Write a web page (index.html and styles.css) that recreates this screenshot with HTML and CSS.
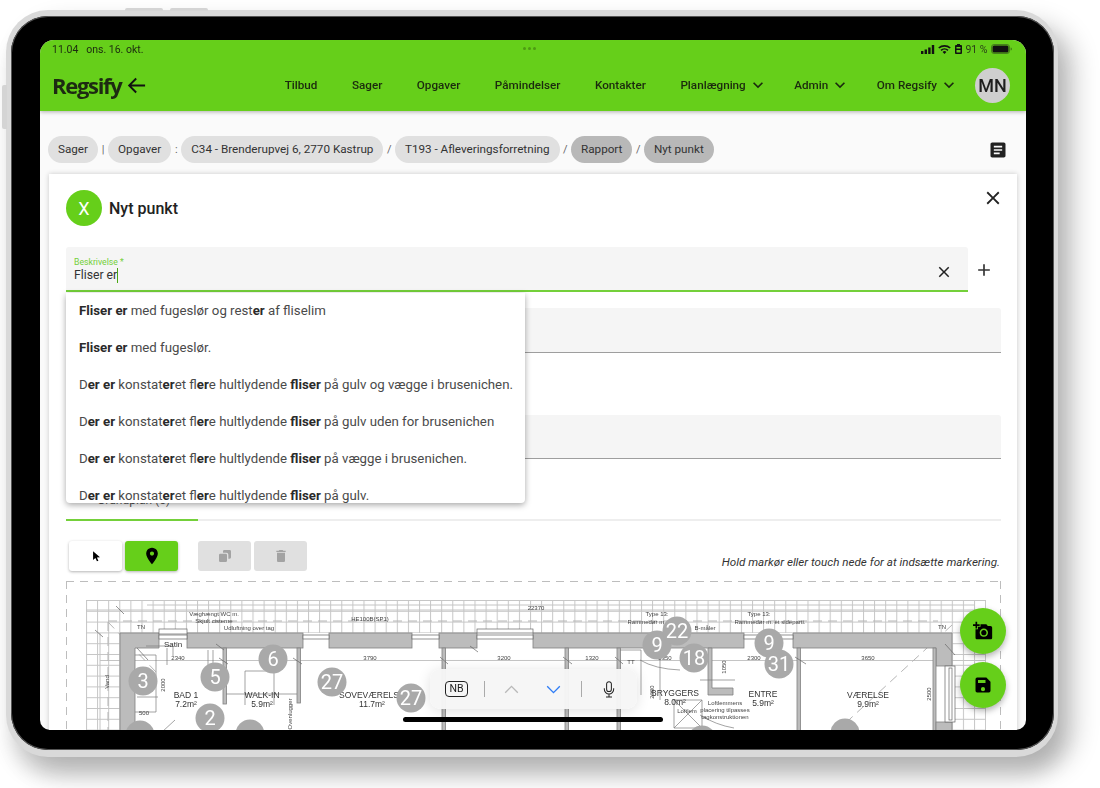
FILE: index.html
```html
<!DOCTYPE html>
<html lang="da">
<head>
<meta charset="utf-8">
<title>Regsify - Nyt punkt</title>
<link rel="stylesheet" href="styles.css">
</head>
<body>
<div class="device">
  <i class="hw hw-top1"></i><i class="hw hw-top2"></i><i class="hw hw-left"></i>
  <div class="bezel">
    <div class="screen">
      <header class="appbar">
        <div class="status">
          <span>11.04 &nbsp;&nbsp;ons. 16. okt.</span>
          <span class="dots"><i></i><i></i><i></i></span>
          <span class="status-right">
            <svg width="14" height="9" viewBox="0 0 14 9"><path d="M0 6h2.4v3H0zM3.6 4.5H6V9H3.6zM7.2 2.5h2.4V9H7.2zM10.8 0h2.4v9h-2.4z"/></svg>
            <svg width="13" height="10" viewBox="0 0 13 10"><path d="M6.5 10 4.6 7.9a2.8 2.8 0 0 1 3.8 0zM3.6 6.9 2.5 5.7a6 6 0 0 1 8 0L9.4 6.9a4.3 4.3 0 0 0-5.8 0zM1.4 4.6 .2 3.4a9.3 9.3 0 0 1 12.6 0l-1.2 1.2a7.6 7.6 0 0 0-10.2 0z"/></svg>
            <svg width="7" height="10" viewBox="0 0 7 10"><path d="M2 0h3v1h1a1 1 0 0 1 1 1v7a1 1 0 0 1-1 1H1a1 1 0 0 1-1-1V2a1 1 0 0 1 1-1h1zM1.500 3v1.500h4V3zm0 3v2.500h4V6z" fill-rule="evenodd"/></svg>
            <span class="pct">91 %</span>
            <svg width="21" height="10" viewBox="0 0 21 10"><rect x=".5" y=".5" width="18" height="9" rx="2.500" fill="none" stroke="#222" stroke-opacity=".45"/><rect x="1.500" y="1.500" width="16" height="7" rx="1.500"/><path d="M19.700 3.500c.8.3 1.100.8 1.100 1.500s-.3 1.200-1.100 1.500z" fill-opacity=".5"/></svg>
          </span>
        </div>
        <nav class="navrow">
          <div class="logo">Regsify
            <svg viewBox="0 0 24 24"><path d="M22 11H7.830l5.590-5.590L12 4l-8 8 8 8 1.410-1.410L7.830 13H22z"/></svg>
          </div>
          <div class="navlinks">
            <span>Tilbud</span><span>Sager</span><span>Opgaver</span><span>Påmindelser</span><span>Kontakter</span>
            <span class="drop">Planlægning <svg viewBox="0 0 24 24"><path d="M16.590 8.590 12 13.170 7.410 8.590 6 10l6 6 6-6z"/></svg></span>
            <span class="drop">Admin <svg viewBox="0 0 24 24"><path d="M16.590 8.590 12 13.170 7.410 8.590 6 10l6 6 6-6z"/></svg></span>
            <span class="drop">Om Regsify <svg viewBox="0 0 24 24"><path d="M16.590 8.590 12 13.170 7.410 8.590 6 10l6 6 6-6z"/></svg></span>
          </div>
          <div class="user">MN</div>
        </nav>
      </header>

      <main class="page">
        <div class="crumbs">
          <span class="chip">Sager</span><span class="sep">|</span>
          <span class="chip">Opgaver</span><span class="sep">:</span>
          <span class="chip">C34 - Brenderupvej 6, 2770 Kastrup</span><span class="sep slash">/</span>
          <span class="chip">T193 - Afleveringsforretning</span><span class="sep slash">/</span>
          <span class="chip dark">Rapport</span><span class="sep slash">/</span>
          <span class="chip dark">Nyt punkt</span>
          <svg class="doc" viewBox="0 0 24 24"><path d="M19 3H5c-1.100 0-2 .9-2 2v14c0 1.100.9 2 2 2h14c1.100 0 2-.9 2-2V5c0-1.100-.9-2-2-2zm-5 14H7v-2h7v2zm3-4H7v-2h10v2zm0-4H7V7h10v2z"/></svg>
        </div>

        <section class="card">
          <div class="card-head">
            <div class="badge">X</div>
            <h1>Nyt punkt</h1>
            <svg class="close" viewBox="0 0 24 24"><path d="M19 6.410 17.590 5 12 10.590 6.410 5 5 6.410 10.590 12 5 17.590 6.410 19 12 13.410 17.590 19 19 17.590 13.410 12z"/></svg>
          </div>

          <div class="desc-row">
            <div class="input active">
              <label>Beskrivelse *</label>
              <div class="value">Fliser er<i class="caret"></i></div>
              <svg class="clear" viewBox="0 0 24 24"><path d="M19 6.410 17.590 5 12 10.590 6.410 5 5 6.410 10.590 12 5 17.590 6.410 19 12 13.410 17.590 19 19 17.590 13.410 12z"/></svg>
              <ul class="suggest">
                <li><b>Fliser er</b> med fugeslør og rest<b>er</b> af fliselim</li>
                <li><b>Fliser er</b> med fugeslør.</li>
                <li>D<b>er er</b> konstat<b>er</b>et fl<b>er</b>e hultlydende <b>fliser</b> på gulv og vægge i brusenichen.</li>
                <li>D<b>er er</b> konstat<b>er</b>et fl<b>er</b>e hultlydende <b>fliser</b> på gulv uden for brusenichen</li>
                <li>D<b>er er</b> konstat<b>er</b>et fl<b>er</b>e hultlydende <b>fliser</b> på vægge i brusenichen.</li>
                <li>D<b>er er</b> konstat<b>er</b>et fl<b>er</b>e hultlydende <b>fliser</b> på gulv.</li>
              </ul>
            </div>
            <svg class="plus" viewBox="0 0 24 24"><path d="M19 13h-6v6h-2v-6H5v-2h6V5h2v6h6v2z"/></svg>
          </div>

          <div class="input blank first"></div>
          <div class="input blank second"></div>

          <div class="tabs"><span class="tab">Grundplan (5)</span></div>

          <div class="tools">
            <button class="tool"><svg viewBox="0 0 24 24"><path d="M7 4v15l4-3.600 2.600 5.800 2.500-1.100-2.600-5.700 5.300-.4z"/></svg></button>
            <button class="tool on"><svg viewBox="0 0 24 24"><path d="M12 2C8.130 2 5 5.130 5 9c0 5.250 7 13 7 13s7-7.750 7-13c0-3.870-3.130-7-7-7zm0 9.500c-1.380 0-2.500-1.120-2.500-2.500s1.120-2.500 2.500-2.500 2.500 1.120 2.500 2.500-1.120 2.500-2.500 2.500z"/></svg></button>
            <button class="tool off gap"><svg viewBox="0 0 24 24"><path d="M11 3h8a2 2 0 0 1 2 2v9a2 2 0 0 1-2 2h-2V10a3 3 0 0 0-3-3H9V5a2 2 0 0 1 2-2zM5 8.500h8a2 2 0 0 1 2 2V19a2 2 0 0 1-2 2H5a2 2 0 0 1-2-2v-8.500a2 2 0 0 1 2-2z"/></svg></button>
            <button class="tool off"><svg viewBox="0 0 24 24"><path d="M6 19c0 1.100.9 2 2 2h8c1.100 0 2-.9 2-2V7H6v12zM19 4h-3.500l-1-1h-5l-1 1H5v2h14V4z"/></svg></button>
            <em class="hint">Hold markør eller touch nede for at indsætte markering.</em>
          </div>

          <div class="plan">
            <svg class="plan-svg" viewBox="66 581 934 150" width="934" height="150">
              <defs>
                <pattern id="grid" x="86" y="600" width="11.100" height="10.800" patternUnits="userSpaceOnUse">
                  <path d="M.5 0V10.800M0 .5H11.100" fill="none" stroke="#c6c6c6" stroke-width="1"/>
                </pattern>
              </defs>
              <rect class="gridfill" x="86" y="600" width="900" height="132"/>
              <rect class="room" x="120" y="633" width="832" height="100"/>
              <path class="dim" d="M86 610H986M100 660.500H986M147 605H975M100 633V730"/>
              <path class="dash" d="M108 621H938M108 622V730M952 625 800 765M108 622 157 673"/>
              <g class="wall">
                <path d="M120 633H159V648H135V732H120z"/>
                <rect x="187" y="633" width="116" height="15"/>
                <rect x="329" y="633" width="83" height="15"/>
                <rect x="439" y="633" width="38" height="15"/>
                <rect x="533" y="633" width="211" height="15"/>
                <path d="M793 633H952V666H936V648H793z"/>
                <rect x="223" y="648" width="3.500" height="56"/>
                <rect x="297" y="648" width="3.500" height="55"/>
                <rect x="442" y="648" width="3.500" height="84"/>
                <rect x="565" y="648" width="3.500" height="84"/>
                <rect x="617" y="648" width="3.500" height="84"/>
                <rect x="797" y="648" width="3.500" height="84"/>
                <rect x="933" y="648" width="3" height="84"/>
                <path d="M708 648H712V688H733V695H708z"/>
                <rect x="936" y="722" width="16" height="10"/>
              </g>
              <g class="win">
                <rect x="159" y="629" width="28" height="5"/><rect x="159" y="635" width="28" height="4"/>
                <rect x="303" y="635" width="26" height="4"/><rect x="412" y="635" width="27" height="4"/>
                <rect x="477" y="635" width="56" height="4"/><rect x="477" y="629" width="56" height="4"/>
                <rect x="744" y="635" width="49" height="4"/><rect x="945" y="666" width="10" height="56"/>
                <rect x="949" y="668" width="3" height="52"/>
              </g>
              <path class="thin" d="M146 646H173V656M620 650H641V695M167 648V665M245 705V671H274V705M226 694H297M135 655H156V712H135M137 697H158M208 650V666M213 650V666M735 680H700M660 655V700M640 660Q655 669 680 670M674 700H702V728H674zM674 700 702 728M702 700 674 728M700 715Q716 725 734 728M175 720 162 732"/>
              <path class="tick" d="M116 606 124 614M95 630 103 637M137 648 148 660M216 644 224 650M219 658 228 664M293 658 302 664M440 657 448 664M470 646 478 652M563 657 572 664M615 657 623 664M945 644 955 655M795 657 806 664M222 716 214 724"/>
              <g class="lbl">
                <text x="536" y="610" class="c">22370</text>
                <text x="214" y="616" class="c">Væghængt WC m.</text>
                <text x="214" y="623" class="c">Skjult cisterne</text>
                <text x="249" y="630" class="c">Udluftning over tag</text>
                <text x="370" y="621" class="c">HE100B(SP1)</text>
                <text x="178" y="660" class="c">2340</text>
                <text x="370" y="660" class="c">3790</text>
                <text x="504" y="660" class="c">3200</text>
                <text x="592" y="660" class="c">1320</text>
                <text x="665" y="660" class="c">2350</text>
                <text x="754" y="660" class="c">2300</text>
                <text x="868" y="660" class="c">3650</text>
                <text x="631" y="664" class="c">TT</text>
                <text x="141" y="629" class="c">TN</text>
                <text x="942" y="629" class="c">TN</text>
                <text x="144" y="715" class="c">500</text>
                <text x="657" y="616" class="c">Type 13:</text>
                <text x="650" y="624" class="c">Rammedør m. et</text>
                <text x="759" y="616" class="c">Type 13:</text>
                <text x="770" y="624" class="c">Rammedør m. et sideparti.</text>
                <text x="705" y="630" class="c">B-måler</text>
                <text x="725" y="705" class="c">Loftlemmens</text>
                <text x="725" y="712" class="c">placering tilpasses</text>
                <text x="725" y="719" class="c">tagkonstruktionen</text>
                <text x="687" y="713" class="c">Loftlem</text>
                <text x="107" y="684" class="c" transform="rotate(-90 107 682)">Vand</text>
                <text x="163" y="687" class="c" transform="rotate(-90 163 685)">2000</text>
                <text x="929" y="696" class="c" transform="rotate(-90 929 694)">2500</text>
                <text x="724" y="669" class="c" transform="rotate(-90 724 667)">1050</text>
                <text x="652" y="694" class="c" transform="rotate(-90 652 692)">2300</text>
                <text x="290" y="712" class="c" transform="rotate(-90 292 712)">Ovenlugger</text>
              </g>
              <g class="room-lbl">
                <text x="186" y="698" class="c">BAD 1</text><text x="186" y="707" class="c">7.2m²</text>
                <text x="262" y="698" class="c">WALK-IN</text><text x="262" y="707" class="c">5.9m²</text>
                <text x="369" y="698" class="c">SOVEVÆRELS</text><text x="372" y="707" class="c">11.7m²</text>
                <text x="675" y="696" class="c">BRYGGERS</text><text x="675" y="705" class="c">8.0m²</text>
                <text x="763" y="697" class="c">ENTRE</text><text x="763" y="706" class="c">5.9m²</text>
                <text x="868" y="698" class="c">VÆRELSE</text><text x="868" y="707" class="c">9.9m²</text>
                <text x="173" y="647" class="c sat">Satin</text>
              </g>
              <g class="pins">
                <circle cx="143" cy="681" r="14.500"/><text x="143" y="688">3</text>
                <circle cx="215" cy="677" r="14.500"/><text x="215" y="684">5</text>
                <circle cx="273" cy="659" r="14.500"/><text x="273" y="666">6</text>
                <circle cx="332" cy="682" r="14.500"/><text x="332" y="689">27</text>
                <circle cx="411" cy="698" r="14.500"/><text x="411" y="705">27</text>
                <circle cx="210" cy="718" r="14.500"/><text x="210" y="725">2</text>
                <circle cx="140" cy="735" r="14.500"/>
                <circle cx="250" cy="734" r="14.500"/>
                <circle cx="702" cy="740" r="14.500"/>
                <circle cx="845" cy="733" r="14.500"/>
                <circle cx="657" cy="645" r="14.500"/><text x="657" y="652">9</text>
                <circle cx="677" cy="631" r="14.500"/><text x="677" y="638">22</text>
                <circle cx="694" cy="658" r="14.500"/><text x="694" y="665">18</text>
                <circle cx="769" cy="643" r="14.500"/><text x="769" y="650">9</text>
                <circle cx="779" cy="664" r="14.500"/><text x="779" y="671">31</text>
              </g>
            </svg>
          </div>
        </section>
      </main>

      <button class="fab fab-cam"><svg viewBox="0 0 24 24"><path d="M3 4V1h2v3h3v2H5v3H3V6H0V4h3zm3 6V7h3V4h7l1.830 2H21c1.100 0 2 .9 2 2v12c0 1.100-.9 2-2 2H5c-1.100 0-2-.9-2-2V10h3zm7 9c2.760 0 5-2.240 5-5s-2.240-5-5-5-5 2.240-5 5 2.240 5 5 5zm-3.200-5c0 1.770 1.430 3.200 3.200 3.200s3.200-1.430 3.200-3.200-1.430-3.200-3.200-3.200-3.200 1.430-3.200 3.200z"/></svg></button>
      <button class="fab fab-save"><svg viewBox="0 0 24 24"><path d="M5 3h11l5 5v11a2 2 0 0 1-2 2H5a2 2 0 0 1-2-2V5a2 2 0 0 1 2-2zm1 3v3.500h9V6zm6 8.500a2.500 2.500 0 1 0 0 5 2.500 2.500 0 0 0 0-5z" fill-rule="evenodd"/></svg></button>

      <div class="kbd">
        <span class="nb">NB</span>
        <i class="kbd-sep"></i>
        <svg class="chev" viewBox="0 0 16 10"><path d="M1 8.500 8 1.500l7 7" stroke="#b9b9b9"/></svg>
        <svg class="chev down" viewBox="0 0 16 10"><path d="M1 1.500l7 7 7-7" stroke="#2f7df6"/></svg>
        <i class="kbd-sep"></i>
        <svg class="mic" viewBox="0 0 14 20"><path d="M7 .8a2.800 2.800 0 0 0-2.800 2.800v6a2.800 2.800 0 0 0 5.600 0v-6A2.800 2.800 0 0 0 7 .8zM1.500 8.500v1.200a5.500 5.500 0 0 0 11 0V8.500M7 15.200v3.300M3.500 18.800h7"/></svg>
      </div>
      <div class="homebar"></div>
    </div>
  </div>
</div>
</body>
</html>
```

FILE: styles.css
```css
* { box-sizing: border-box; }
html, body { margin: 0; height: 100%; background: #fff; overflow: hidden; }
body { font-family: Roboto, "Liberation Sans", sans-serif; color: #212121; padding: 10px 0 0 6px; }

/* device frame */
.device { position: relative; width: 1052px; height: 747px; border-radius: 42px; background: #d9d9d9; padding: 6px 4px 7px 5px; box-shadow: 16px 14px 26px rgba(0,0,0,.22), 4px 20px 20px rgba(0,0,0,.12); }
.hw { position: absolute; background: #d4d4d4; display: block; }
.hw-top1 { left: 119px; top: -2px; width: 38px; height: 3px; border-radius: 2px 2px 0 0; }
.hw-top2 { left: 164px; top: -2px; width: 38px; height: 3px; border-radius: 2px 2px 0 0; }
.hw-left { left: -4px; top: 75px; width: 5px; height: 44px; border-radius: 2px 0 0 2px; }
.bezel { background: #000; border-radius: 37px; height: 100%; padding: 24px 28px 20px 29px; box-shadow: inset 0 0 0 1px #555; }
.screen { position: relative; width: 986px; height: 690px; border-radius: 14px 14px 10px 10px; overflow: hidden; background: #fafafa; display: flex; flex-direction: column; filter: blur(.3px); }

/* app bar */
.appbar { flex: none; height: 71px; background: #66cf1a; padding: 0 14px 0 12px; box-shadow: 0 1px 4px rgba(0,0,0,.3); position: relative; z-index: 2; display: flex; flex-direction: column; }
.status { height: 16px; margin-top: 1px; display: flex; align-items: center; justify-content: space-between; font-size: 10.500px; color: #1c2a10; position: relative; }
.dots { position: absolute; left: 471px; top: 6px; display: flex; gap: 2px; }
.dots i { width: 3px; height: 3px; border-radius: 50%; background: #4d9c13; }
.status-right { display: flex; align-items: center; gap: 3.500px; }
.status-right svg { display: block; fill: #111; }
.pct { color: #2a3d18; }
.navrow { flex: 1; display: flex; align-items: center; padding-top: 2px; }
.logo { display: flex; align-items: center; gap: 2px; font-size: 22px; font-weight: 700; font-family: "Open Sans", Roboto, sans-serif; letter-spacing: -1.300px; color: #1d2b12; }
.logo svg { width: 23px; height: 23px; fill: #111; }
.navlinks { margin-left: auto; display: flex; align-items: center; gap: 34.500px; font-size: 11.700px; font-weight: 500; color: #1b2a0e; }
.drop { display: flex; align-items: center; gap: 2px; margin-right: -8px; }
.drop svg { width: 20px; height: 20px; fill: #1b2a0e; }
.user { width: 35px; height: 35px; margin-left: 24px; margin-right: 2px; border-radius: 50%; background: #cfcfcf; display: flex; align-items: center; justify-content: center; font-size: 18px; font-weight: 500; color: #1e1e1e; }

/* page */
.page { flex: 1; min-height: 0; padding: 25px 9px 0; }
.crumbs { height: 27px; display: flex; align-items: center; font-size: 11.700px; font-weight: 400; color: #333; margin: 0 -1px; padding-right: 6px; }
.chip { height: 27px; line-height: 27px; border-radius: 14px; background: #e0e0e0; padding: 0 10px; white-space: nowrap; }
.chip.dark { background: #b8b8b8; }
.sep { width: 10px; text-align: center; color: #666; font-size: 11px; }
.sep.slash { width: 11.500px; }
.doc { width: 20px; height: 20px; margin-left: auto; fill: #212121; margin-right: 4px; }

.card { margin-top: 11px; background: #fff; box-shadow: 0 0 5px rgba(0,0,0,.2); padding: 16px 16px 0 17px; height: 600px; width: 968px; }
.card-head { display: flex; align-items: center; gap: 7px; height: 36px; }
.badge { width: 36px; height: 36px; border-radius: 50%; background: #66cf1a; color: #fff; display: flex; align-items: center; justify-content: center; font-size: 18px; }
.card-head h1 { margin: 0; font-size: 16px; font-weight: 500; color: #222; }
.close { width: 22px; height: 22px; margin-left: auto; margin-top: -20px; margin-right: -3px; fill: #222; }

.desc-row { margin-top: 21px; display: flex; align-items: flex-start; }
.input { background: #f5f5f5; position: relative; }
.input.active { width: 902px; height: 45px; border-bottom: 2px solid #74d03a; padding: 10px 8px 0; border-radius: 3px 3px 0 0; z-index: 3; }
.input label { display: block; font-size: 8.700px; line-height: 10px; color: #74d03a; }
.value { font-size: 12.200px; line-height: 15px; margin-top: 1px; color: #333; display: flex; align-items: center; }
.caret { width: 1px; height: 15px; background: #4aa812; }
.clear { position: absolute; right: 15px; top: 16px; width: 18px; height: 18px; fill: #222; }
.plus { width: 20px; height: 20px; margin: 13px 0 0 6px; fill: #333; }
.suggest { position: absolute; left: 0; top: 46px; width: 459px; height: 210px; margin: 0; padding: 0; list-style: none; background: #fff; overflow: hidden; box-shadow: 0 2px 6px rgba(0,0,0,.35); border-radius: 0 0 4px 4px; z-index: 5; font-size: 13.250px; color: #4a4a4a; }
.suggest li { height: 37px; line-height: 35px; padding-left: 13px; white-space: nowrap; }
.suggest b { font-weight: 700; color: #2a2a2a; }
.input.blank { height: 45px; border-bottom: 1px solid #9e9e9e; border-radius: 3px 3px 0 0; }
.input.first { margin-top: 16px; }
.input.second { margin-top: 62px; height: 44px; }
.tabs { margin-top: 24px; height: 38px; border-bottom: 2px solid #eee; position: relative; font-size: 12px; color: #555; }
.tab { position: absolute; left: 0; bottom: -2px; width: 132px; height: 38px; padding-left: 31px; line-height: 34px; border-bottom: 2px solid #74d03a; }

.tools { margin-top: 20px; padding-left: 3px; display: flex; align-items: center; gap: 3px; height: 30px; }
.tool { width: 53px; height: 30px; border: 0; padding: 0; border-radius: 3px; background: #fff; box-shadow: 0 1px 3px rgba(0,0,0,.3); display: flex; align-items: center; justify-content: center; }
.tool svg { width: 14px; height: 14px; fill: #000; }
.tool.on { background: #66cf1a; }
.tool.on svg { width: 20px; height: 20px; }
.tool.off { background: #e0e0e0; box-shadow: none; }
.tool.off svg { fill: #a3a3a3; width: 16px; height: 16px; }
.tool.gap { margin-left: 17px; }
.hint { margin-left: auto; font-size: 11.650px; color: #333; padding-top: 12px; margin-right: 1px; }

.plan { margin-top: 10px; width: 935px; height: 170px;
  background:
    linear-gradient(90deg, #bdbdbd 8px, transparent 8px) 0 0 / 14px 1px repeat-x,
    linear-gradient(180deg, #bdbdbd 8px, transparent 8px) 0 0 / 1px 14px repeat-y,
    linear-gradient(180deg, #bdbdbd 8px, transparent 8px) 100% 0 / 1px 14px repeat-y; }
.plan-svg { display: block; }
.gridfill { fill: url(#grid); }
.room { fill: #fff; }
.dim { stroke: #c4c4c4; stroke-width: 1; fill: none; }
.dash { stroke: #b5b5b5; stroke-width: 1; stroke-dasharray: 9 6; fill: none; }
.wall { fill: #bcbcbc; stroke: #808080; stroke-width: .8; }
.win { fill: #fff; stroke: #666; stroke-width: .7; }
.thin { fill: none; stroke: #7d7d7d; stroke-width: .7; }
.tick { fill: none; stroke: #666; stroke-width: .7; }
.lbl text { font: 6px "Liberation Sans", sans-serif; fill: #444; }
.room-lbl text { font: 8.500px "Liberation Sans", sans-serif; fill: #333; }
.room-lbl .sat { font-size: 8px; }
.c { text-anchor: middle; }
.pins circle { fill: #a9a9a9; }
.pins text { fill: #fff; font: 400 20px Roboto, sans-serif; text-anchor: middle; }

/* floating */
.fab { position: absolute; width: 46px; height: 46px; left: 920px; border: 0; padding: 0; border-radius: 50%; background: #66cf1a; box-shadow: 0 3px 6px rgba(0,0,0,.3); display: flex; align-items: center; justify-content: center; z-index: 6; }
.fab svg { width: 20px; height: 20px; fill: #000; }
.fab-cam { top: 568px; }
.fab-save { top: 622px; }
.kbd { position: absolute; left: 390px; top: 629px; width: 207px; height: 40px; border-radius: 10px; background: rgba(246,246,246,.96); box-shadow: 0 2px 14px rgba(0,0,0,.12); display: flex; align-items: center; padding: 0 20px 0 15px; z-index: 6; }
.nb { width: 23px; height: 16px; border: 1.300px solid #222; border-radius: 4px; font-size: 10.500px; font-weight: 400; line-height: 13.500px; text-align: center; color: #222; }
.kbd-sep { width: 1px; height: 16px; background: #aaa; margin-left: 16px; }
.kbd-sep + .chev { margin-left: 19px; }
.chev { width: 15px; height: 9px; fill: none; stroke-width: 1.500; }
.chev.down { margin-left: 27px; }
.chev.down + .kbd-sep { margin-left: 20px; }
.mic { width: 12px; height: 17px; margin-left: 21px; fill: none; stroke: #222; stroke-width: 1.200; }
.homebar { position: absolute; left: 363px; top: 677px; width: 260px; height: 5px; border-radius: 3px; background: #000; z-index: 7; }
```
